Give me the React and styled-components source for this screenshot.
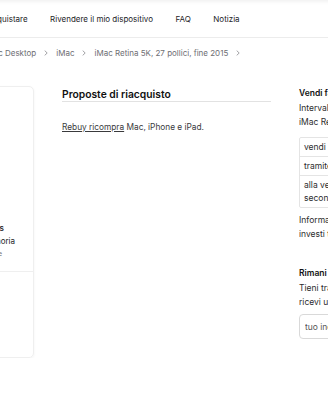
import styled, { createGlobalStyle } from 'styled-components';

const GlobalStyle = createGlobalStyle`
  *, *::before, *::after {
    box-sizing: border-box;
  }
  html, body {
    margin: 0;
    padding: 0;
    background: #fff;
  }
  body {
    font-family: Inter, "Liberation Sans", Arial, sans-serif;
    color: #1d1d1f;
    overflow: hidden;
  }
`;

const Page = styled.div`
  width: 100%;
  overflow: hidden;
`;

const Inner = styled.div`
  width: 720px;
  margin-left: -170px;
`;

const Header = styled.header`
  height: 38px;
  padding-top: 1px;
  border-bottom: 1px solid #ececec;
  box-shadow: inset 0 4px 4px -3px rgba(0, 0, 0, 0.08);
  display: flex;
  align-items: center;
  padding-left: 157px;
`;

const Nav = styled.nav`
  display: flex;
  gap: 22.5px;
  font-size: 8px;
  color: #1d1d1f;
`;

const Crumbs = styled.div`
  height: 29px;
  padding-top: 1px;
  display: flex;
  align-items: center;
  gap: 8px;
  padding-left: 114px;
  font-size: 8px;
  color: #6e6e73;
`;

const Chevron = () => (
  <svg width="4" height="6" viewBox="0 0 4 6" fill="none">
    <path d="M0.7 0.6L3.2 3L0.7 5.4" stroke="#8a8a8e" strokeWidth="0.8" />
  </svg>
);

const Main = styled.div`
  display: flex;
  align-items: flex-start;
  margin-top: 19px;
  gap: 28px;
`;

const Card = styled.div`
  width: 204px;
  height: 272px;
  flex-shrink: 0;
  border: 1px solid #efefef;
  border-radius: 5px;
  box-shadow: 0 1px 3px rgba(0, 0, 0, 0.05);
  display: flex;
  flex-direction: column;
`;

const CardTop = styled.div`
  height: 185px;
  border-bottom: 1px solid #efefef;
  display: flex;
  flex-direction: column;
  justify-content: flex-end;
  text-align: right;
  padding-bottom: 12px;
`;

const CardLine = styled.div`
  font-size: ${(p) => (p.small ? '7px' : '8px')};
  font-weight: ${(p) => (p.bold ? 600 : 400)};
  color: ${(p) => (p.small ? '#777' : '#1d1d1f')};
  line-height: ${(p) => (p.small ? '11px' : '13px')};
  margin-right: ${(p) => p.trail}px;
  white-space: nowrap;
`;

const Middle = styled.section`
  width: 209px;
  flex-shrink: 0;
`;

const Title = styled.h2`
  margin: 0;
  font-size: 10.3px;
  font-weight: 600;
  line-height: 13px;
  padding: 2px 0 0;
  border-bottom: 1px solid #e2e2e2;
  color: #111;
`;

const Text = styled.p`
  margin: 20px 0 0;
  font-size: 8.3px;
  line-height: 10px;
  color: #3a3a3c;
`;

const Link = styled.a`
  color: #3a3a3c;
  text-decoration: underline;
  text-underline-offset: 1px;
`;

const Side = styled.aside`
  width: 200px;
  flex-shrink: 0;
  margin-top: 1px;
  font-size: 8.5px;
  line-height: 13.5px;
  color: #2c2c2e;
`;

const SideTitle = styled.div`
  font-weight: 600;
  color: #111;
  line-height: 13px;
  margin-bottom: 2px;
`;

const Table = styled.div`
  margin-top: 8px;
  border: 1px solid #e4e4e4;
  border-radius: 2px;
  line-height: 13px;
`;

const Row = styled.div`
  padding: 2.5px 4px;
  border-top: ${(p) => (p.first ? 'none' : '1px solid #e4e4e4')};
`;

const Note = styled.div`
  margin-top: 6px;
`;

const Newsletter = styled.div`
  margin-top: 26px;
`;

const Input = styled.input`
  display: block;
  width: 180px;
  height: 25px;
  margin-top: 5px;
  padding: 0 5px;
  border: 1px solid #d9d9d9;
  border-radius: 4px;
  font-family: inherit;
  font-size: 8.5px;
  &::placeholder {
    color: #555;
  }
`;

export default function App() {
  return (
    <Page>
      <GlobalStyle />
      <Inner>
        <Header>
          <Nav>
            <span>Acquistare</span>
            <span>Rivendere il mio dispositivo</span>
            <span>FAQ</span>
            <span>Notizia</span>
          </Nav>
        </Header>
        <Crumbs>
          <span>Home</span>
          <Chevron />
          <span>Mac Desktop</span>
          <Chevron />
          <span>iMac</span>
          <Chevron />
          <span>iMac Retina 5K, 27 pollici, fine 2015</span>
          <Chevron />
        </Crumbs>
        <Main>
          <Card>
            <CardTop>
              <CardLine bold trail={29}>
                Spedizione e ritiro gratis
              </CardLine>
              <CardLine trail={18}>Core i5, 8 GB di memoria</CardLine>
              <CardLine small trail={31}>
                1 TB di archiviazione
              </CardLine>
            </CardTop>
          </Card>
          <Middle>
            <Title>Proposte di riacquisto</Title>
            <Text>
              <Link href="#">Rebuy ricompra</Link> Mac, iPhone e iPad.
            </Text>
          </Middle>
          <Side>
            <SideTitle>Vendi facilmente il tuo iMac</SideTitle>
            <div>
              Intervallo di prezzo per
              <br />
              iMac Retina 5K, 27 pollici
            </div>
            <Table>
              <Row first>vendi subito</Row>
              <Row>tramite rebuy</Row>
              <Row>
                alla vendita privata
                <br />
                seconda mano
              </Row>
            </Table>
            <Note>
              Informazioni sul prezzo:
              <br />
              investi tempo e denaro
            </Note>
            <Newsletter>
              <SideTitle>Rimani aggiornato</SideTitle>
              <div>
                Tieni traccia dei prezzi e
                <br />
                ricevi un avviso
              </div>
              <Input placeholder="tuo indirizzo email" />
            </Newsletter>
          </Side>
        </Main>
      </Inner>
    </Page>
  );
}
